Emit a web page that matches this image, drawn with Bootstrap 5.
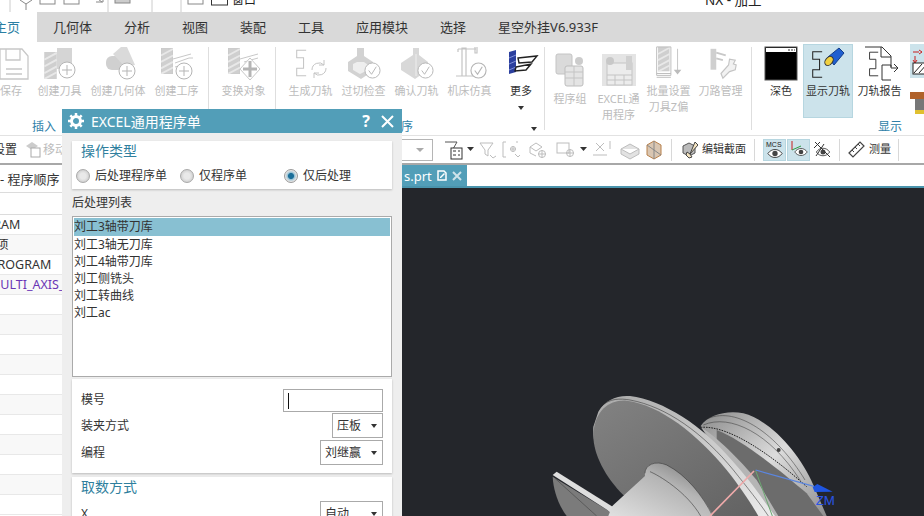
<!DOCTYPE html>
<html lang="zh">
<head>
  <meta charset="UTF-8">
  <meta name="viewport" content="width=device-width, initial-scale=1.0">
  <title>NX - 加工</title>
  <!-- Bootstrap CSS -->
  <link rel="stylesheet" href="https://cdn.jsdelivr.net/npm/bootstrap@5.3.3/dist/css/bootstrap.min.css">
  <style>
    html, body { height: 100%; }
    body {
      width: 924px; height: 516px; overflow: hidden; position: relative; background: #fff;
      font-family: "Noto Sans", "Noto Sans CJK SC", sans-serif; font-size: 12px; color: #333;
    }
    svg { display: block; flex: none; }

    /* top bar, only its lower half is on screen */
    .quick-bar { height: 12px; overflow: hidden; }
    .quick-inner { height: 24px; margin-top: -12px; }
    .quick-win { margin-left: 4px; font-size: 12px; width: 473px; color: #222; }
    .quick-title { font-size: 13.5px; color: #222; }

    /* tabs */
    .tab-row { height: 30px; background: #d9d9d9; font-size: 13px; line-height: 30px; color: #333; }
    .tab-home { width: 37px; background: #fff; color: #2a7fa3; margin-right: 16px; text-align: right; padding-right: 17px; white-space: nowrap; direction: rtl; }
    .tab-item { margin-right: 32px; white-space: nowrap; }

    /* ribbon */
    .rib { height: 93px; }
    .rib-row { height: 78px; margin-left: -6px; }
    .rib-item { font-size: 11px; line-height: 16px; text-align: center; color: #bcbcbc; white-space: nowrap; flex: none; }
    .rib-item svg { margin: 3px auto 0; width: 40px; height: 38px; }
    .rib-tall svg { margin-top: 9px; height: 40px; }
    .rib-dark { color: #333; }
    .rib-on { background: #cce3eb; outline: 1px solid #b6d6e0; outline-offset: -1px; height: 74px; margin-top: 2px; }
    .rib-on svg { margin-top: 1px; }
    .w34 { width: 34px; } .w44 { width: 44px; } .w47 { width: 47px; } .w50 { width: 50px; }
    .w52 { width: 52px; } .w53 { width: 53px; } .w64 { width: 64px; }
    .ms-5px { margin-left: 5px; } .ms-3px { margin-left: 3px; } .ms-8px { margin-left: 8px; }
    .ms-1px { margin-left: 1px; } .ms-2px { margin-left: 2px; } .ms-4px { margin-left: 4px; } .ms-7px { margin-left: 7px; }
    .rib-sep { width: 1px; height: 83px; margin-top: 5px; background: #dedede; flex: none; }
    .rib-side svg { width: 20px; margin: 0; }
    .rib-labels { height: 15px; font-size: 12px; line-height: 14px; color: #2f7fa8; white-space: nowrap; }
    .lbl-insert { margin-left: 32px; width: 357px; }
    .lbl-op { width: 142px; }
    .lbl-more { width: 347px; }
    .tri { width: 0; height: 0; border-left: 3.5px solid transparent; border-right: 3.5px solid transparent; border-top: 4px solid #333; flex: none; }
    .rib-item .tri { margin: 7px auto 0; }

    /* toolbar */
    .tool-row { height: 30px; border-top: 1px solid #e2e2e2; border-bottom: 2px solid #a8a8a8; font-size: 12px; white-space: nowrap; }
    .tool-left { width: 380px; overflow: hidden; flex: none; }
    .tool-clip { margin-left: -7px; }
    .tool-grey { color: #bcbcbc; margin-left: 2px; }
    .tool-combo { width: 53px; height: 22px; border: 1px solid #b5b5b5; flex: none; padding-right: 8px; }
    .tool-combo .tri { border-top-color: #aaa; border-left-width: 4px; border-right-width: 4px; }
    .tool-text { color: #333; font-size: 11px; }
    .tool-sep { width: 1px; height: 22px; background: #d8d8d8; flex: none; }
    .tool-on { width: 23px; height: 22px; background: #cce3eb; outline: 1px solid #b6d6e0; outline-offset: -1px; flex: none; }
    .m-l-2 { margin-left: 2px; } .m-l-4 { margin-left: 4px; } .m-l-8 { margin-left: 8px; } .m-l-10 { margin-left: 10px; } .m-l-9 { margin-left: 9px; }
    .m-l-5 { margin-left: 5px; } .m-l-7 { margin-left: 7px; }

    /* lower part */
    .work { height: 351px; }
    .nav-pane { width: 402px; flex: none; overflow: hidden; }
    .nav-head { height: 28px; border-bottom: 1px solid #dcdcdc; font-size: 13px; line-height: 28px; white-space: nowrap; }
    .nav-cols { height: 22px; border-bottom: 1px solid #dcdcdc; }
    .nav-line { height: 20px; border-bottom: 1px solid #e8e8e8; font-size: 12.5px; line-height: 19px; white-space: nowrap; }
    .nav-line:nth-child(even) { background: #f8f8f8; }
    .pull-am { margin-left: -41px; } .pull-xiang { margin-left: -4px; } .pull-pr { margin-left: -10px; } .pull-mu { margin-left: -11px; }
    .nav-purple { color: #6a35b5; }
    .view-col { min-width: 0; }
    .doc-strip { height: 21px; flex: none; }
    .doc-tab { width: 65px; background: #529eb8; color: #fff; font-size: 13px; line-height: 20px; padding-left: 2px; }
    .doc-view { background: #24262b; border-top: 2px solid #4a94ad; }

    /* dialog over the work area */
    .dlg { position: absolute; left: 62px; top: 109px; width: 340px; height: 407px; background: #eeeeee; overflow: hidden; }
    .dlg > * { flex: none; }
    .dlg-title { height: 24px; background: #529eb8; color: #fff; font-size: 14px; padding: 0 8px 0 6px; }
    .dlg-name { margin-left: 7px; }
    .dlg-help { font-weight: 700; font-size: 16px; margin-right: 11px; }
    .dlg-sec { background: #fff; margin: 0 10px; box-shadow: 0 1px 2px #bbb; }
    .sec-type { margin-top: 8px; height: 48px; padding: 0 9px; }
    .sec-name { color: #2f7f9e; font-size: 14px; line-height: 20px; }
    .radio-row { margin: 7px 0 0 -5px; line-height: 16px; }
    .radio-cell { width: 104px; gap: 5px; flex: none; }
    .dlg-radio.form-check-input { width: 14px; height: 14px; margin: 0; border: 1px solid #a9a9a9; background: radial-gradient(circle, #e9e9e9 35%, #cfcfcf 75%); }
    .dlg-radio.form-check-input:checked { border-color: #9a9a9a; background: radial-gradient(circle, #1c6f99 0 30%, #9cc4d6 42%, #e4e4e4 65%); }
    .list-name { margin: 6px 10px 0; line-height: 16px; }
    .list-box { margin: 5px 10px 0; height: 161px; background: #fff; border: 1px solid #aaa; padding: 1px 1px 0; border-radius: 0; }
    .list-box .list-group-item { padding: 0; border: 0; height: 17px; line-height: 17px; font-size: 12px; color: #333; background: transparent; border-radius: 0; flex: none; }
    .list-box .list-group-item.active { background: #88c0d2; color: #333; height: 18px; line-height: 18px; }
    .sec-form { margin-top: 2px; height: 94px; padding: 9px 9px 0 9px; }
    .form-line { height: 27px; }
    .form-line-first { height: 24px; }
    .dlg-input { width: 100px; height: 23px; border: 1px solid #aaa; padding: 3px 0 0 4px; }
    .dlg-caret { width: 1px; height: 16px; background: #111; }
    .dlg-pick { height: 25px; border: 1px solid #aaa; padding: 0 5px 0 4px; line-height: 23px; gap: 8px; }
    .pick-s { width: 51px; } .pick-l { width: 63px; }
    .sec-fetch { margin-top: 4px; height: 60px; padding: 0 9px; }
    .fetch-line { margin-top: 4px; }
  </style>
</head>
<body>
  <!-- shared icon parts -->
  <svg class="d-none">
    <symbol id="plus" viewBox="0 0 18 18"><circle cx="9" cy="9" r="8" fill="#fff" stroke="#b5b5b5"/><path d="M9 4v10M4 9h10" stroke="#b5b5b5" fill="none"/></symbol>
    <symbol id="tick" viewBox="0 0 18 18"><circle cx="9" cy="9" r="8" fill="#fff" stroke="#b5b5b5"/><path d="M5 9l3 4 5-8" stroke="#b5b5b5" fill="none"/></symbol>
    <symbol id="drill" viewBox="0 0 13 28"><rect width="13" height="28" fill="#cfcfcf"/><path d="M0 8L13 1M0 15L13 8M0 22L13 15M0 28L13 21" stroke="#e8e8e8" stroke-width="2"/></symbol>
    <symbol id="snake" viewBox="0 0 14 32"><path d="M13 1H2v9h8v12H2v9h11" fill="none" stroke="currentColor" stroke-width="1.2"/></symbol>
    <symbol id="eye" viewBox="0 0 18 12"><path d="M1 6c4-6 12-6 16 0-4 6-12 6-16 0z" fill="#fff" stroke="#333"/><circle cx="9" cy="6" r="3" fill="#444"/></symbol>
  </svg>

  <div class="quick-bar">
    <div class="quick-inner d-flex align-items-center">
      <svg width="228" height="24" viewBox="0 0 228 24" fill="none" stroke="#888">
        <path d="M10 0v24M108 0v24M152 0v24M181 0v24" stroke="#ccc"/>
        <path d="M20 12l6 4 6-4M26 16v6" /><rect x="40" y="2" width="15" height="14"/><rect x="64" y="2" width="15" height="14"/>
        <path d="M88 4l14 10M96 14h7V8"/><rect x="115" y="2" width="15" height="13" fill="#ccc"/>
        <path d="M165 6l5 5 5-5" stroke="#333"/><rect x="188" y="2" width="15" height="14"/>
        <rect x="211.500" y="2" width="16" height="15" stroke="#333"/>
      </svg>
      <span class="quick-win">窗口</span>
      <span class="quick-title">NX - 加工</span>
    </div>
  </div>

  <div class="tab-row d-flex">
    <div class="tab-home">主页</div>
    <div class="tab-item">几何体</div>
    <div class="tab-item">分析</div>
    <div class="tab-item">视图</div>
    <div class="tab-item">装配</div>
    <div class="tab-item">工具</div>
    <div class="tab-item">应用模块</div>
    <div class="tab-item">选择</div>
    <div class="tab-item">星空外挂V6.933F</div>
  </div>

  <div class="rib">
    <div class="rib-row d-flex align-items-start">
      <div class="rib-item w34">
        <svg viewBox="0 0 40 38" fill="none" stroke="#c8c8c8" stroke-width="1.3"><path d="M6 4h22l6 7v23H6z"/><path d="M12 4v11h14V4M12 24h16M12 29h16"/></svg>保存
      </div>
      <div class="rib-item w53 ms-5px">
        <svg viewBox="0 0 40 38"><use href="#drill" x="4" y="7" width="13" height="27"/><path d="M17 3h15v21H17z" fill="#d5d5d5"/><use href="#plus" x="18" y="16" width="18" height="18"/></svg>创建刀具
      </div>
      <div class="rib-item w64">
        <svg viewBox="0 0 40 38"><rect x="8" y="11" width="18" height="14" rx="6" fill="#d0d0d0"/><path d="M15 9l8-7h6l8 18-10 2z" fill="#dadada"/><use href="#plus" x="20" y="17" width="18" height="18"/></svg>创建几何体
      </div>
      <div class="rib-item w53">
        <svg viewBox="0 0 40 38" fill="none" stroke="#c8c8c8"><use href="#drill" x="4" y="3" width="12" height="26"/><path d="M16 14l18-5M18 18l14-5h4M18 22l10-3"/><use href="#plus" x="18" y="17" width="18" height="18"/></svg>创建工序
      </div>
      <div class="rib-sep ms-5px"></div>
      <div class="rib-item w53 ms-8px">
        <svg viewBox="0 0 40 38" fill="none" stroke="#c8c8c8"><use href="#drill" x="4" y="3" width="12" height="26"/><path d="M16 14l18-5M20 17l14-4"/><path d="M26 13l10 11-10 11-10-11z" fill="#fff"/><path d="M26 16v16M19 24h14" stroke="#b5b5b5" stroke-width="3"/></svg>变换对象
      </div>
      <div class="rib-sep ms-5px"></div>
      <div class="rib-item w53 ms-8px">
        <svg viewBox="0 0 40 38" fill="none" stroke="#c4c4c4" color="#c4c4c4"><use href="#snake" x="4" y="3" width="12" height="30"/><path d="M21 25a7 7 0 0 1 12-5M35 23a7 7 0 0 1-12 5"/><path d="M33 15v5h-5M23 33v-5h5"/></svg>生成刀轨
      </div>
      <div class="rib-item w53">
        <svg viewBox="0 0 40 38" fill="none"><path d="M4 17l9-6v-8h7v8l9 6v9l-12 8-13-8z" fill="#d2d2d2"/><path d="M9 19l4-2h7l4 3v5l-8 4-7-4z" fill="#eee"/><use href="#tick" x="20" y="17" width="17" height="17"/></svg>过切检查
      </div>
      <div class="rib-item w53">
        <svg viewBox="0 0 40 38" fill="none"><path d="M4 18l12-8v-7h6v7l9 7v8l-13 9-14-9z" fill="#d8d8d8"/><path d="M19 9v22" stroke="#eee"/><use href="#tick" x="20" y="17" width="17" height="17"/></svg>确认刀轨
      </div>
      <div class="rib-item w53">
        <svg viewBox="0 0 40 38" fill="none" stroke="#c4c4c4" stroke-width="1.2"><path d="M6 31h22M12 31V3h4v28M8 4h18M25 2v6h2V2M8 4v3"/><use href="#tick" x="20" y="17" width="17" height="17"/></svg>机床仿真
      </div>
      <div class="rib-item w44 rib-dark ms-3px">
        <svg viewBox="0 0 40 38"><path d="M8 7l7-2v22l-7 2z" fill="#2b3f9e"/><path d="M8 13l7-3M8 19l7-3M8 25l7-3" stroke="#7e8fd8"/><path d="M17 13l19-2-5 6-13 1zM15 22l15-3-5 6-11 1z" fill="none" stroke="#222" stroke-width="1.4"/></svg>更多
        <div class="tri"></div>
      </div>
      <div class="rib-sep ms-1px"></div>
      <div class="rib-item w44 rib-tall ms-3px">
        <svg viewBox="0 0 40 40"><rect x="6" y="3" width="16" height="20" rx="2" fill="#dadada" stroke="#c4c4c4"/><rect x="15" y="15" width="18" height="20" rx="2" fill="#e4e4e4" stroke="#bdbdbd"/><path d="M15 21h18M15 27h18M24 15v20" stroke="#c4c4c4"/><circle cx="29" cy="10" r="4" fill="#ccc"/></svg>程序组
      </div>
      <div class="rib-item w53 rib-tall">
        <svg viewBox="0 0 40 40"><rect x="3" y="3" width="34" height="32" fill="#e4e4e4"/><rect x="8" y="12" width="25" height="22" fill="#ececec" stroke="#c4c4c4"/><path d="M8 24h25M8 29h25M16 24v10M25 24v10" stroke="#c4c4c4"/><circle cx="11" cy="10" r="4" fill="#c8c8c8"/><rect x="27" y="5" width="6" height="14" fill="#d0d0d0"/></svg>EXCEL通<br>用程序
      </div>
      <div class="rib-item w47">
        <svg viewBox="0 0 40 40" fill="none"><use href="#drill" x="7" y="2" width="15" height="26"/><path d="M7 2h15v30H7z" stroke="#bcbcbc"/><path d="M7 30h15M7 34h15" stroke="#bcbcbc"/><path d="M29 4v24" stroke="#c4c4c4"/><path d="M25 26h8l-4 5z" fill="#bcbcbc"/></svg>批量设置<br>刀具Z偏
      </div>
      <div class="rib-item w53 ms-2px">
        <svg viewBox="0 0 40 40" fill="none"><rect x="9" y="4" width="6" height="22" fill="#cfcfcf"/><path d="M15 8l10 3M15 14l7 2" stroke="#c8c8c8" stroke-width="2"/><path d="M20 30l8-9 1-6 6 1-2 4 3 1-1 5-6 2-7 7z" fill="#f2f2f2" stroke="#c4c4c4" stroke-width="1.2"/></svg>刀路管理
      </div>
      <div class="rib-sep ms-4px"></div>
      <div class="rib-item w44 rib-dark ms-7px">
        <svg viewBox="0 0 40 38"><rect x="4" y="2" width="32" height="33" fill="#000" stroke="#555"/><rect x="5" y="3" width="30" height="4" fill="#fff"/><path d="M27 5h2M30 5h2M33 5h1" stroke="#333"/></svg>深色
      </div>
      <div class="rib-item w50 rib-dark rib-on">
        <svg viewBox="0 0 40 38" color="#222"><use href="#snake" x="3" y="4" width="12" height="31"/><path d="M20 12L31 3l5 5-10 12z" fill="#1f5fd0" stroke="#123d88"/><ellipse cx="21" cy="16" rx="3.500" ry="5" transform="rotate(40 21 16)" fill="#f0d040" stroke="#333"/></svg>显示刀轨
      </div>
      <div class="rib-item w53 rib-dark">
        <svg viewBox="0 0 40 38" fill="none" stroke="#333" color="#333"><path d="M5 2h17l9 9v11M21 2v10h10"/><use href="#snake" x="8" y="6" width="11" height="26"/><path d="M22 20h9v3h7M34 19l4 4-4 4M22 20v15h9"/></svg>刀轨报告
      </div>
      <div class="rib-item rib-side ms-4px d-flex flex-column gap-1">
        <svg viewBox="0 0 20 34" height="34"><rect width="20" height="34" fill="#cce3eb"/><path d="M3 8h6M9 6l3 2-3 2M5 12v6M3 16l2 3 2-3" stroke="#c81e1e" fill="none"/><rect x="3" y="19" width="15" height="11" fill="#fff" stroke="#222"/><path d="M4 29l8-9M9 29l8-9" stroke="#222"/></svg>
        <svg viewBox="0 0 20 26" height="26"><path d="M0 2h20v7H0z" fill="#b0622a"/><rect x="5" y="9" width="14" height="11" fill="#777"/><rect x="5" y="20" width="14" height="4" fill="#e0c030"/></svg>
      </div>
    </div>
    <div class="rib-labels d-flex">
      <span class="lbl-insert">插入</span>
      <span class="lbl-op">工序</span>
      <span class="lbl-more"><span class="tri d-inline-block"></span></span>
      <span>显示</span>
    </div>
  </div>

  <div class="tool-row d-flex align-items-center">
    <div class="tool-left d-flex align-items-center">
      <span class="tool-clip">设置</span>
      <svg class="m-l-8" width="16" height="18" viewBox="0 0 16 18"><path d="M1 5l6-4 6 4-6 4z" fill="#ccc"/><rect x="6" y="7" width="9" height="9" fill="#fff" stroke="#aaa"/></svg>
      <span class="tool-grey">移动</span>
    </div>
    <div class="tool-combo d-flex align-items-center justify-content-end"><span class="tri"></span></div>
    <svg class="m-l-10" width="228" height="24" viewBox="0 0 228 24" fill="none" stroke="#bdbdbd">
      <path d="M2 4h12l-4 7v7" stroke="#555"/><rect x="8" y="10" width="11" height="11" fill="#fff" stroke="#333"/><path d="M10 13h3M15 13h2M10 17h3M15 17h2" stroke="#333"/>
      <path d="M24 9h7l-3.500 4z" fill="#333" stroke="none"/>
      <path d="M37 5h13l-5 7v6l-3-2v-4zM47 17l3 3 3-2"/>
      <path d="M63 4h-3v15h3M73 4h2M67 11h6M70 8v6M72 16l3 3 2-2"/><circle cx="70" cy="11" r="2.500"/>
      <path d="M87 9l6-4 6 4-6 4zM87 9v6l6 3"/><circle cx="99" cy="16" r="3.500"/><path d="M95 16h8M99 12v8"/>
      <rect x="114" y="5" width="12" height="10"/><circle cx="127" cy="15" r="3.500"/><path d="M123 15h8M127 11v8"/>
      <path d="M137 9h7l-3.500 4z" fill="#333" stroke="none"/>
      <path d="M153 5l8 8M161 5l-8 8M150 17h14M167 3v8"/>
      <path d="M178 11l9-5 9 5-9 5zM178 11v5l9 5 9-5v-5" fill="#e2e2e2"/>
      <path d="M204 7l7-4 7 4v10l-7 4-7-4z" fill="#d9c6b2" stroke="#b8804a"/><path d="M211 3v18M204 7l14 10" stroke="#888"/>
    </svg>
    <div class="tool-sep"></div>
    <svg class="m-l-9" width="17" height="18" viewBox="0 0 17 18"><path d="M2 5l6-3 6 3v7l-6 3-6-3z" fill="#bbb" stroke="#555"/><path d="M14 1l3 3-8 9 2 3-3 1-3-3 1-3 3 2z" fill="#f3e3c0" stroke="#444"/></svg>
    <span class="tool-text m-l-4">编辑截面</span>
    <div class="tool-sep m-l-8"></div>
    <div class="tool-on m-l-8 d-flex flex-column align-items-center">
      <svg width="20" height="20" viewBox="0 0 20 20"><text x="1" y="8" font-size="7" font-family="Liberation Sans" fill="#222">MCS</text><use href="#eye" x="2" y="9" width="16" height="11"/></svg>
    </div>
    <div class="tool-on ms-1px d-flex justify-content-center">
      <svg width="20" height="20" viewBox="0 0 20 20" fill="none"><path d="M3 2v9" stroke="#c81e1e"/><path d="M3 11l9-4" stroke="#2f9e44"/><use href="#eye" x="5" y="8" width="14" height="10"/></svg>
    </div>
    <svg class="m-l-2" width="20" height="20" viewBox="0 0 20 20" fill="none"><use href="#eye" x="3" y="7" width="16" height="10"/><path d="M2 8l6-6M3 2l15 15M12 4l-8 12" stroke="#333"/></svg>
    <div class="tool-sep m-l-7"></div>
    <svg class="m-l-8" width="17" height="17" viewBox="0 0 17 17" fill="none"><path d="M1 12L12 1l4 4L5 16z" stroke="#444" stroke-width="1.2"/><path d="M4 9l2 2M7 6l2 2M10 3l2 2" stroke="#444"/></svg>
    <span class="tool-text m-l-4">测量</span>
    <div class="tool-sep m-l-7"></div>
  </div>

  <div class="work d-flex">
    <div class="nav-pane">
      <div class="nav-head">- 程序顺序</div>
      <div class="nav-cols"></div>
      <div class="nav-line"><div class="pull-am">PROGRAM</div></div>
      <div class="nav-line"><div class="pull-xiang">项</div></div>
      <div class="nav-line"><div class="pull-pr">PROGRAM</div></div>
      <div class="nav-line nav-purple"><div class="pull-mu">MULTI_AXIS_ROUGH</div></div>
      <div class="nav-line"></div><div class="nav-line"></div><div class="nav-line"></div><div class="nav-line"></div>
      <div class="nav-line"></div><div class="nav-line"></div><div class="nav-line"></div><div class="nav-line"></div>
      <div class="nav-line"></div><div class="nav-line"></div><div class="nav-line"></div>
    </div>
    <div class="view-col flex-grow-1 d-flex flex-column">
      <div class="doc-strip d-flex">
        <div class="doc-tab d-flex align-items-center">
          <span>s.prt</span>
          <svg class="m-l-5" width="10" height="11" viewBox="0 0 10 11"><path d="M1 1h6l2 2v7H1z" fill="none" stroke="#fff" stroke-width="1.500"/><path d="M3 7l4-4 1 1-4 4H3z" fill="#fff"/></svg>
          <svg class="m-l-5" width="10" height="10" viewBox="0 0 10 10"><path d="M1 1l8 8M9 1l-8 8" stroke="#cfe3ea" stroke-width="2"/></svg>
        </div>
      </div>
      <div class="doc-view flex-grow-1">
        <svg width="522" height="328" viewBox="402 188 522 328">
          <defs>
            <linearGradient id="domeFill" x1="0" y1="0" x2="1" y2="1"><stop offset="0" stop-color="#8a8a8a"/><stop offset=".5" stop-color="#dcdcdc"/><stop offset="1" stop-color="#8f8f8f"/></linearGradient>
            <linearGradient id="hubFill" x1="0" y1="1" x2="1" y2="0"><stop offset="0" stop-color="#e2e2e2"/><stop offset=".6" stop-color="#b5b5b5"/><stop offset="1" stop-color="#6f6f6f"/></linearGradient>
            <linearGradient id="faceFill" x1="0" y1="0" x2="1" y2="1"><stop offset="0" stop-color="#828282"/><stop offset="1" stop-color="#626262"/></linearGradient>
            <linearGradient id="rimFill" x1="0" y1="0" x2="1" y2="1"><stop offset="0" stop-color="#a8a8a8"/><stop offset="1" stop-color="#ececec"/></linearGradient>
          </defs>
          <g transform="translate(530 370) scale(.33333)">
            <!-- rear dome -->
            <path d="M512 168C535 135 590 120 640 130C720 150 810 250 850 345L890 438H700L560 250Z" fill="url(#domeFill)"/>
            <path d="M535 145C620 110 740 190 825 330M520 165C600 130 720 190 810 330" fill="none" stroke="#333" stroke-width="1.5"/>
            <path d="M512 172C600 165 730 260 830 350" fill="none" stroke="#222" stroke-width="3" stroke-dasharray="5 3"/>
            <circle cx="746" cy="240" r="6" fill="#444"/>
            <!-- inner face -->
            <path d="M560 180C640 210 760 310 830 370L880 438H690L560 250Z" fill="#6c6c6c"/>
            <path d="M512 172C560 200 630 270 680 330L745 438H690C660 350 590 260 512 172Z" fill="#b5b5b5"/>
            <!-- big flange -->
            <path d="M205 125C225 90 260 75 300 78C400 90 520 170 600 265C660 330 700 390 735 438H560L290 380C230 320 185 240 190 170Z" fill="url(#rimFill)"/>
            <path d="M190 190C195 120 240 88 290 92C390 105 500 190 590 300C630 350 660 395 685 438H530L280 375C225 320 188 250 190 190Z" fill="url(#faceFill)"/>
            <path d="M215 108C240 85 270 85 300 90C410 110 520 190 610 300C650 350 690 400 715 438" fill="none" stroke="#222" stroke-width="1.500"/>
            <!-- hub -->
            <path d="M345 318C340 285 375 268 410 285C470 315 520 380 550 438H220L250 405Z" fill="url(#hubFill)"/>
            <path d="M345 310C345 285 375 270 410 285C470 315 520 380 548 438M360 305C385 315 470 365 512 438" fill="none" stroke="#222" stroke-width="1.500"/>
            <!-- front plate -->
            <path d="M68 320C70 360 85 405 110 438H235L240 425Z" fill="#7b7b7b"/>
            <path d="M68 315L80 305L248 410L240 425Z" fill="#dedede"/>
            <path d="M75 325L200 438" stroke="#3a3a3a" stroke-width="1.500"/>
            <!-- axes -->
            <path d="M672 303L540 438" stroke="#efaaaa" stroke-width="5"/>
            <path d="M677 302L727 438" stroke="#6aa870" stroke-width="3"/>
            <path d="M677 300L852 349" stroke="#5b86e0" stroke-width="3.500"/>
            <path d="M848 352L862 342L908 365L854 366Z" fill="#1f55e0"/>
            <text x="857" y="406" font-size="40" font-family="Liberation Sans" fill="#2a55e5">ZM</text>
          </g>
        </svg>
      </div>
    </div>
  </div>

  <div class="dlg d-flex flex-column">
    <div class="dlg-title d-flex align-items-center">
      <svg width="16" height="16" viewBox="0 0 16 16"><circle cx="8" cy="8" r="4.500" fill="none" stroke="#fff" stroke-width="3"/><path d="M8 0v3M8 13v3M0 8h3M13 8h3M2.300 2.300l2 2M11.700 11.700l2 2M2.300 13.700l2-2M11.700 4.300l2-2" stroke="#fff" stroke-width="2.500"/></svg>
      <span class="dlg-name flex-grow-1">EXCEL通用程序单</span>
      <span class="dlg-help">?</span>
      <svg width="13" height="13" viewBox="0 0 13 13"><path d="M1 1l11 11M12 1L1 12" stroke="#fff" stroke-width="2"/></svg>
    </div>
    <div class="dlg-sec sec-type">
      <div class="sec-name">操作类型</div>
      <div class="radio-row d-flex">
        <label class="radio-cell d-flex align-items-center"><input class="form-check-input dlg-radio" type="radio" name="optype">后处理程序单</label>
        <label class="radio-cell d-flex align-items-center"><input class="form-check-input dlg-radio" type="radio" name="optype">仅程序单</label>
        <label class="radio-cell d-flex align-items-center"><input class="form-check-input dlg-radio" type="radio" name="optype" checked>仅后处理</label>
      </div>
    </div>
    <div class="list-name">后处理列表</div>
    <div class="list-group list-box">
      <div class="list-group-item active">刘工3轴带刀库</div>
      <div class="list-group-item">刘工3轴无刀库</div>
      <div class="list-group-item">刘工4轴带刀库</div>
      <div class="list-group-item">刘工侧铣头</div>
      <div class="list-group-item">刘工转曲线</div>
      <div class="list-group-item">刘工ac</div>
    </div>
    <div class="dlg-sec sec-form">
      <div class="form-line-first d-flex justify-content-between align-items-center">
        <span>模号</span>
        <div class="dlg-input"><div class="dlg-caret"></div></div>
      </div>
      <div class="form-line d-flex justify-content-between align-items-center">
        <span>装夹方式</span>
        <div class="dlg-pick pick-s d-flex align-items-center justify-content-between">压板<span class="tri"></span></div>
      </div>
      <div class="form-line d-flex justify-content-between align-items-center">
        <span>编程</span>
        <div class="dlg-pick pick-l d-flex align-items-center justify-content-between">刘继赢<span class="tri"></span></div>
      </div>
    </div>
    <div class="dlg-sec sec-fetch">
      <div class="sec-name">取数方式</div>
      <div class="fetch-line d-flex justify-content-between align-items-center">
        <span>X</span>
        <div class="dlg-pick pick-l d-flex align-items-center justify-content-between">自动<span class="tri"></span></div>
      </div>
    </div>
  </div>

  <script src="https://cdn.jsdelivr.net/npm/bootstrap@5.3.3/dist/js/bootstrap.bundle.min.js"></script>
</body>
</html>
